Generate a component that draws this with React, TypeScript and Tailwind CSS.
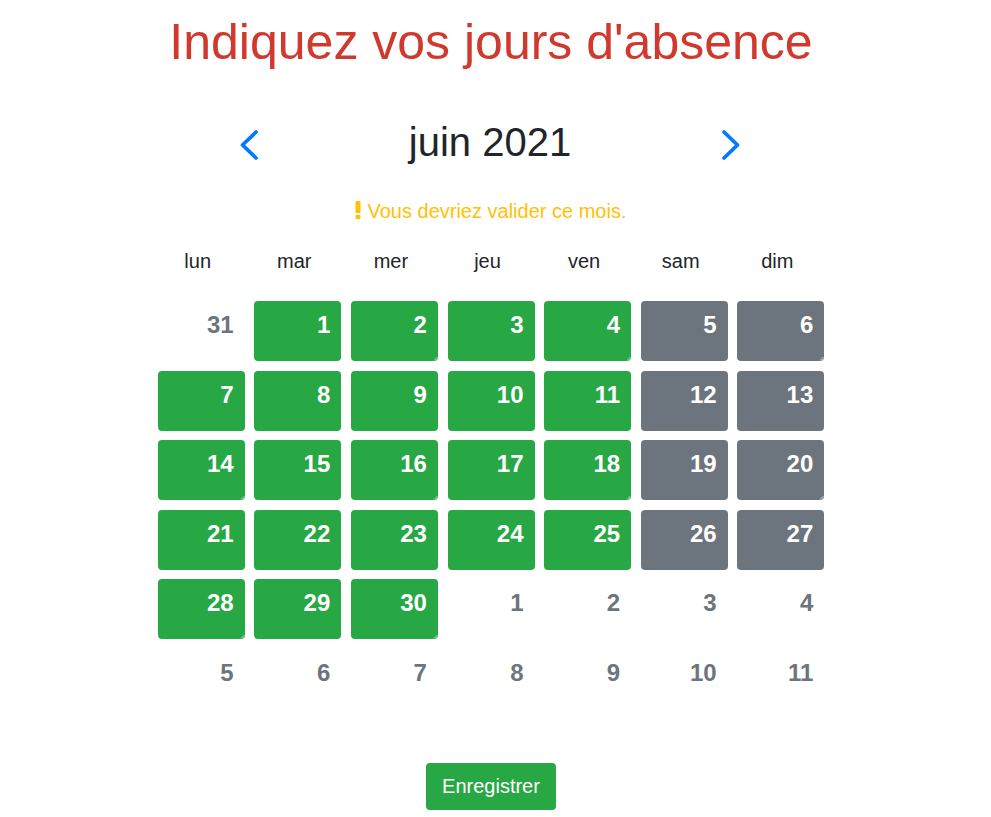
import React from "react";

type Cell = { n: number; kind: "out" | "work" | "weekend"; mark?: boolean };

const rows: Cell[][] = (() => {
  const days: Cell[] = [];
  days.push({ n: 31, kind: "out" });
  for (let d = 1; d <= 30; d++) {
    const idx = days.length;
    const col = idx % 7;
    days.push({ n: d, kind: col >= 5 ? "weekend" : "work" });
  }
  for (let d = 1; d <= 11; d++) days.push({ n: d, kind: "out" });
  const out: Cell[][] = [];
  for (let r = 0; r < 6; r++) {
    out.push(
      days.slice(r * 7, r * 7 + 7).map((c, col) => ({
        ...c,
        mark: c.kind !== "out" && r % 2 === 0 && col % 2 === 0,
      }))
    );
  }
  return out;
})();

const headers = ["lun", "mar", "mer", "jeu", "ven", "sam", "dim"];

function Chevron({ dir }: { dir: "left" | "right" }) {
  return (
    <svg width="20" height="32" viewBox="0 0 20 32" fill="none">
      {dir === "left" ? (
        <path d="M17 3 L3.5 16 L17 29" stroke="#007bff" strokeWidth="3.8" strokeLinecap="round" strokeLinejoin="round" />
      ) : (
        <path d="M3 3 L16.5 16 L3 29" stroke="#007bff" strokeWidth="3.8" strokeLinecap="round" strokeLinejoin="round" />
      )}
    </svg>
  );
}

function Mark() {
  return (
    <svg className="absolute right-0 bottom-0" width="5" height="5" viewBox="0 0 5 5">
      <path d="M4.5 1 L1 4.5 M4.5 3 L3 4.5" stroke="#d8e6da" strokeWidth="0.8" />
    </svg>
  );
}

export default function App() {
  return (
    <div className="w-[982px] bg-white flex flex-col items-center pt-[12px] pb-[7px]" style={{ fontFamily: '"Liberation Sans", Arial, sans-serif' }}>
      <h1 className="text-[50px] leading-[60px] text-[#d0392e] font-normal">Indiquez vos jours d'absence</h1>

      <div className="mt-[46px] w-[500px] flex items-center justify-between">
        <div className="pt-[5px] -ml-[2px]"><Chevron dir="left" /></div>
        <div className="text-[40px] leading-[48px] text-[#212529]">juin 2021</div>
        <div className="pt-[5px]"><Chevron dir="right" /></div>
      </div>

      <div className="mt-[30px] text-[20px] leading-[30px] text-[#ffc107] flex items-center">
        <svg width="6" height="18" viewBox="0 0 6 18" className="mr-[6px] -mt-[3px]">
          <rect x="0.5" y="0" width="5" height="12" rx="0.8" fill="#ffc107" />
          <rect x="0.5" y="14" width="5" height="4" rx="0.8" fill="#ffc107" />
        </svg>
        <span>Vous devriez valider ce mois.</span>
      </div>

      <div className="mt-[20px] grid grid-cols-[repeat(7,87px)] gap-x-[9.6px] pr-[7px]">
        {headers.map((h) => (
          <div key={h} className="text-center text-[20px] leading-[30px] text-[#212529]">{h}</div>
        ))}
      </div>

      <div className="mt-[25px] grid grid-cols-[repeat(7,87px)] gap-x-[9.6px] gap-y-[9.5px]">
        {rows.flat().map((c, i) => (
          <div
            key={i}
            className={
              "relative h-[60px] rounded-[4px] pr-[11px] pt-[6px] text-right text-[24px] leading-[36px] font-bold " +
              (c.kind === "work"
                ? "bg-[#28a745] text-white"
                : c.kind === "weekend"
                ? "bg-[#6c757d] text-white"
                : "text-[#6c757d]")
            }
          >
            {c.n}
            {c.mark && <Mark />}
          </div>
        ))}
      </div>

      <button className="mt-[54px] h-[47px] px-[16px] rounded-[4px] bg-[#28a745] text-white text-[20px] leading-[30px]">
        Enregistrer
      </button>
    </div>
  );
}
